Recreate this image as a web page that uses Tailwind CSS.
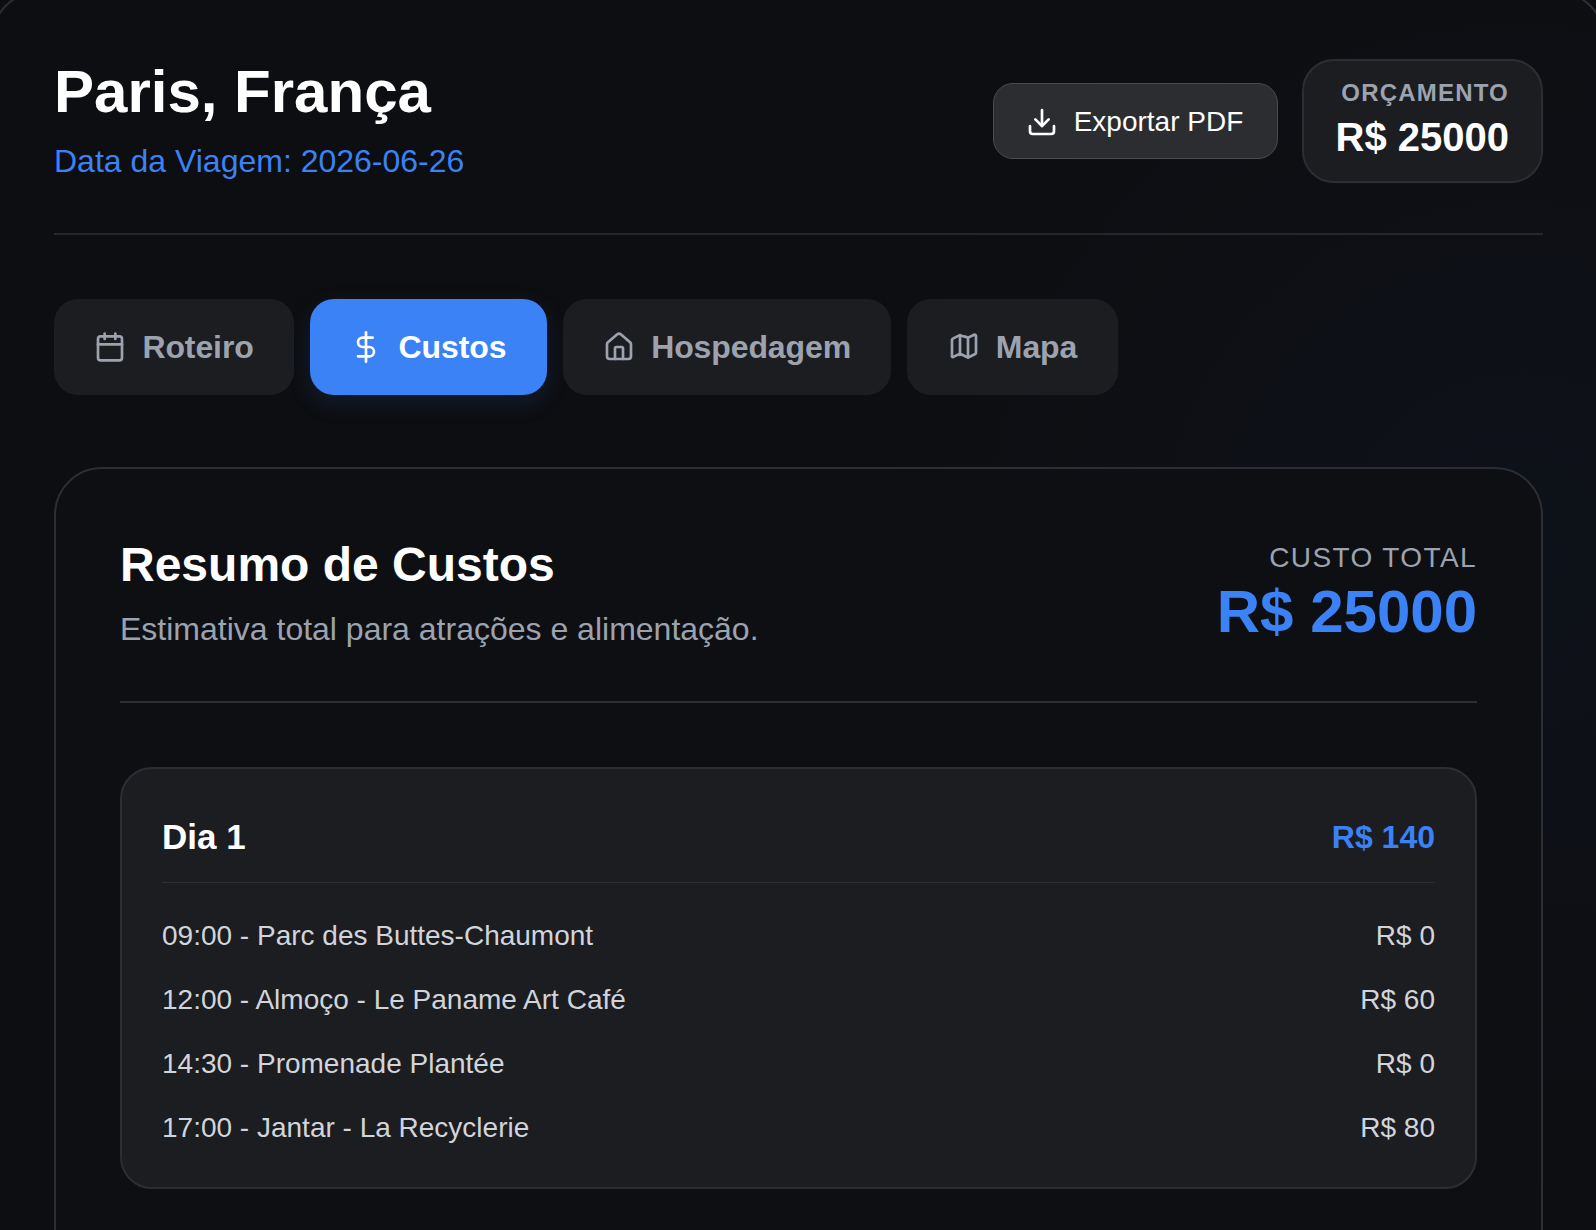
<!DOCTYPE html>
<html lang="pt-BR">
<head>
    <meta charset="UTF-8">
    <title>Paris, França</title>
    <script src="https://cdn.jsdelivr.net/npm/@tailwindcss/browser@4"></script>
</head>
<body class="bg-[#0d0e11] font-['Liberation_Sans',Arial,sans-serif] text-white">
    <div class="relative h-[1230px] overflow-hidden bg-[radial-gradient(circle_at_95%_45%,rgba(37,99,235,0.04),transparent_40%)] pl-[54px] pr-[53px] pt-[59px]">
        <!-- Outer frame, only its corners show -->
        <div class="absolute -left-[9px] -right-[9px] -top-[9px] h-[1400px] rounded-[48px] border-2 border-[#2c2e33] pointer-events-none"></div>

        <!-- Header -->
        <header class="flex items-start justify-between h-[176px] border-b-2 border-[#26272b]">
            <div>
                <h1 class="text-[60px] leading-[66px] font-bold">Paris, França</h1>
                <p class="mt-[16px] text-[32px] leading-[40px] text-[#3b82f6]">Data da Viagem: 2026-06-26</p>
            </div>
            <div class="flex items-center gap-[24px]">
                <button class="flex items-center gap-[16px] h-[76px] w-[285px] justify-center rounded-[20px] border border-[#4a4b50] bg-[#2c2d31] pt-[2px] pr-[2px] text-[28px]">
                    <svg class="w-[32px] h-[32px]" viewBox="0 0 24 24" fill="none" stroke="currentColor" stroke-width="2" stroke-linecap="round" stroke-linejoin="round"><path d="M21 15v4a2 2 0 0 1-2 2H5a2 2 0 0 1-2-2v-4"/><path d="M7 10l5 5 5-5"/><path d="M12 15V3"/></svg>
                    Exportar PDF
                </button>
                <div class="flex flex-col items-end h-[124px] w-[241px] rounded-[32px] border-2 border-[#2c2e33] bg-[#1c1d21] pt-[16px] pr-[32px]">
                    <span class="text-[24px] leading-[32px] font-bold tracking-[1.2px] text-[#9ca3af]">ORÇAMENTO</span>
                    <span class="mt-[4px] text-[40px] leading-[48px] font-bold">R$ 25000</span>
                </div>
            </div>
        </header>

        <!-- Tabs -->
        <nav class="flex gap-[16px] mt-[64px]">
            <button class="flex items-center gap-[16px] h-[96px] px-[40.4px] rounded-[24px] bg-[#1c1d21] text-[32px] font-bold tracking-[-0.1px] text-[#9ca3af]">
                <svg class="w-[32px] h-[32px]" viewBox="0 0 24 24" fill="none" stroke="currentColor" stroke-width="2" stroke-linecap="round" stroke-linejoin="round"><path d="M8 2v4"/><path d="M16 2v4"/><rect x="3" y="4" width="18" height="18" rx="2"/><path d="M3 10h18"/></svg>
                Roteiro
            </button>
            <button class="flex items-center gap-[16px] h-[96px] px-[40.4px] rounded-[24px] bg-[#3b82f6] text-[32px] font-bold tracking-[-0.1px] text-white shadow-[0_8px_24px_rgba(59,130,246,0.12)]">
                <svg class="w-[32px] h-[32px]" viewBox="0 0 24 24" fill="none" stroke="currentColor" stroke-width="2" stroke-linecap="round" stroke-linejoin="round"><path d="M12 1v22"/><path d="M17 5H9.5a3.5 3.5 0 0 0 0 7h5a3.5 3.5 0 0 1 0 7H6"/></svg>
                Custos
            </button>
            <button class="flex items-center gap-[16px] h-[96px] px-[40.4px] rounded-[24px] bg-[#1c1d21] text-[32px] font-bold tracking-[-0.1px] text-[#9ca3af]">
                <svg class="w-[32px] h-[32px]" viewBox="0 0 24 24" fill="none" stroke="currentColor" stroke-width="2" stroke-linecap="round" stroke-linejoin="round"><path d="M15 21v-8a1 1 0 0 0-1-1h-4a1 1 0 0 0-1 1v8"/><path d="M3 10a2 2 0 0 1 .7-1.5l7-6a2 2 0 0 1 2.6 0l7 6a2 2 0 0 1 .7 1.5v9a2 2 0 0 1-2 2H5a2 2 0 0 1-2-2z"/></svg>
                Hospedagem
            </button>
            <button class="flex items-center gap-[16px] h-[96px] px-[40.4px] rounded-[24px] bg-[#1c1d21] text-[32px] font-bold tracking-[-0.1px] text-[#9ca3af]">
                <svg class="w-[32px] h-[32px]" viewBox="0 0 24 24" fill="none" stroke="currentColor" stroke-width="2" stroke-linecap="round" stroke-linejoin="round"><path d="M14.1 4.6a2 2 0 0 0 1.8 0l3.7-1.8A1 1 0 0 1 21 3.7v12.7a1 1 0 0 1-.6.9l-4.5 2.2a2 2 0 0 1-1.8 0l-4.2-2.1a2 2 0 0 0-1.8 0l-3.7 1.8A1 1 0 0 1 3 19.3V6.6a1 1 0 0 1 .6-.9l4.5-2.2a2 2 0 0 1 1.8 0z"/><path d="M15 5v15"/><path d="M9 3v15"/></svg>
                Mapa
            </button>
        </nav>

        <!-- Costs card -->
        <section class="mt-[72px] h-[900px] rounded-[48px] border-2 border-[#2c2e33] bg-[#0e0f13] px-[64px] pt-[68px]">
            <div class="flex items-start justify-between h-[166px] border-b-2 border-[#2c2e33]">
                <div>
                    <h2 class="text-[48px] leading-[56px] font-bold">Resumo de Custos</h2>
                    <p class="mt-[12px] text-[32px] leading-[48px] text-[#9ca3af]">Estimativa total para atrações e alimentação.</p>
                </div>
                <div class="text-right">
                    <p class="mt-[5px] text-[28px] leading-[32px] tracking-[1.4px] text-[#9ca3af]">CUSTO TOTAL</p>
                    <p class="mt-[5px] text-[60px] leading-[66px] font-bold text-[#3b82f6]">R$ 25000</p>
                </div>
            </div>

            <div class="mt-[64px] h-[422px] rounded-[32px] border-2 border-[#2c2e33] bg-[#1c1d21] px-[40px] pt-[40px]">
                <div class="flex items-center justify-between h-[74px] pb-[16px] border-b border-[#2c2e33]">
                    <h3 class="text-[35px] font-bold">Dia 1</h3>
                    <span class="pb-[2px] text-[32px] font-bold text-[#3b82f6]">R$ 140</span>
                </div>
                <ul class="mt-[21px] text-[28px] text-[#d1d5db]">
                    <li class="flex justify-between h-[64px] items-center"><span>09:00 - Parc des Buttes-Chaumont</span><span>R$ 0</span></li>
                    <li class="flex justify-between h-[64px] items-center"><span>12:00 - Almoço - Le Paname Art Café</span><span>R$ 60</span></li>
                    <li class="flex justify-between h-[64px] items-center"><span>14:30 - Promenade Plantée</span><span>R$ 0</span></li>
                    <li class="flex justify-between h-[64px] items-center"><span>17:00 - Jantar - La Recyclerie</span><span>R$ 80</span></li>
                </ul>
            </div>
        </section>
    </div>
</body>
</html>
